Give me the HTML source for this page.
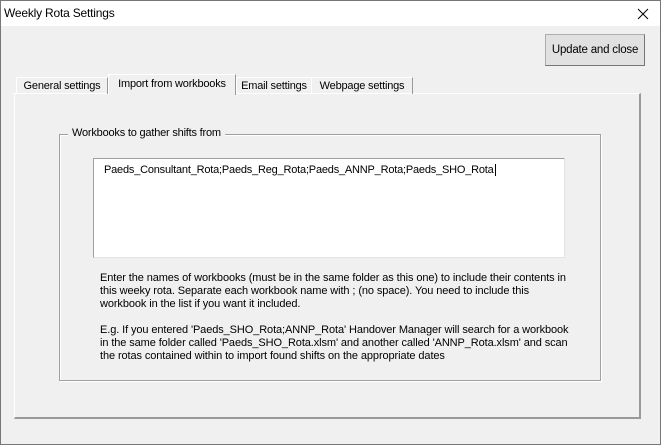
<!DOCTYPE html>
<html><head><style>
body{margin:0;width:661px;height:445px;background:#f0f0f0;font-family:"Liberation Sans",sans-serif;font-size:11px;letter-spacing:-0.2px;color:#000;position:relative;overflow:hidden}
.a{position:absolute}
</style></head><body>
<div class="a" style="left:0;top:0;width:659px;height:443px;border:1px solid #777"></div>
<div class="a" style="left:1px;top:1px;width:659px;height:25px;background:#fff"></div>
<div class="a" style="left:4px;top:6px;font-size:12px">Weekly Rota Settings</div>
<svg class="a" style="left:637px;top:8px" width="12" height="12"><path d="M1 1L11 11M11 1L1 11" stroke="#000" stroke-width="1"/></svg>
<div class="a" style="left:545px;top:34px;width:98px;height:30px;border:1px solid #adadad;border-right-color:#777;border-bottom-color:#777;background:#e1e1e1;text-align:center;line-height:30px;font-size:11.5px">Update and close</div>
<div class="a" style="left:14px;top:93px;width:624px;height:323px;border:1px solid #fff;border-right:2px solid #999;border-bottom:2px solid #999"></div>
<div class="a" style="left:16px;top:77px;width:90px;height:16px;border:1px solid #fff;border-right-color:#999;border-bottom:none;line-height:16px;text-align:center">General settings</div>
<div class="a" style="left:236px;top:77px;width:74px;height:16px;border:1px solid #fff;border-right-color:#999;border-bottom:none;line-height:16px;text-align:center">Email settings</div>
<div class="a" style="left:311px;top:77px;width:100px;height:16px;border:1px solid #fff;border-right-color:#999;border-bottom:none;line-height:16px;text-align:center">Webpage settings</div>
<div class="a" style="left:108px;top:74px;width:126px;height:20px;border:1px solid #fff;border-right-color:#999;border-bottom:none;background:#f0f0f0;line-height:18px;text-align:center">Import from workbooks</div>
<div class="a" style="left:59px;top:134px;width:540px;height:245px;border:1px solid #a0a0a0;box-shadow:1px 1px 0 #fff, inset 1px 1px 0 #fff"></div>
<div class="a" style="left:68px;top:127px;padding:0 4px;background:#f0f0f0">Workbooks to gather shifts from</div>
<div class="a" style="left:93px;top:158px;width:470px;height:98px;background:#fff;border:1px solid #a0a0a0;border-right-color:#e3e3e3;border-bottom-color:#e3e3e3"></div>
<div class="a" style="left:104px;top:164px">Paeds_Consultant_Rota;Paeds_Reg_Rota;Paeds_ANNP_Rota;Paeds_SHO_Rota<span style="border-left:1px solid #000;margin-left:1px"></span></div>
<div class="a" style="left:100px;top:272px;width:520px;line-height:13px;letter-spacing:-0.1px">Enter the names of workbooks (must be in the same folder as this one) to include their contents in<br>this weeky rota. Separate each workbook name with ; (no space). You need to include this<br>workbook in the list if you want it included.<br><br>E.g. If you entered 'Paeds_SHO_Rota;ANNP_Rota' Handover Manager will search for a workbook<br>in the same folder called 'Paeds_SHO_Rota.xlsm' and another called 'ANNP_Rota.xlsm' and scan<br>the rotas contained within to import found shifts on the appropriate dates</div>
</body></html>
